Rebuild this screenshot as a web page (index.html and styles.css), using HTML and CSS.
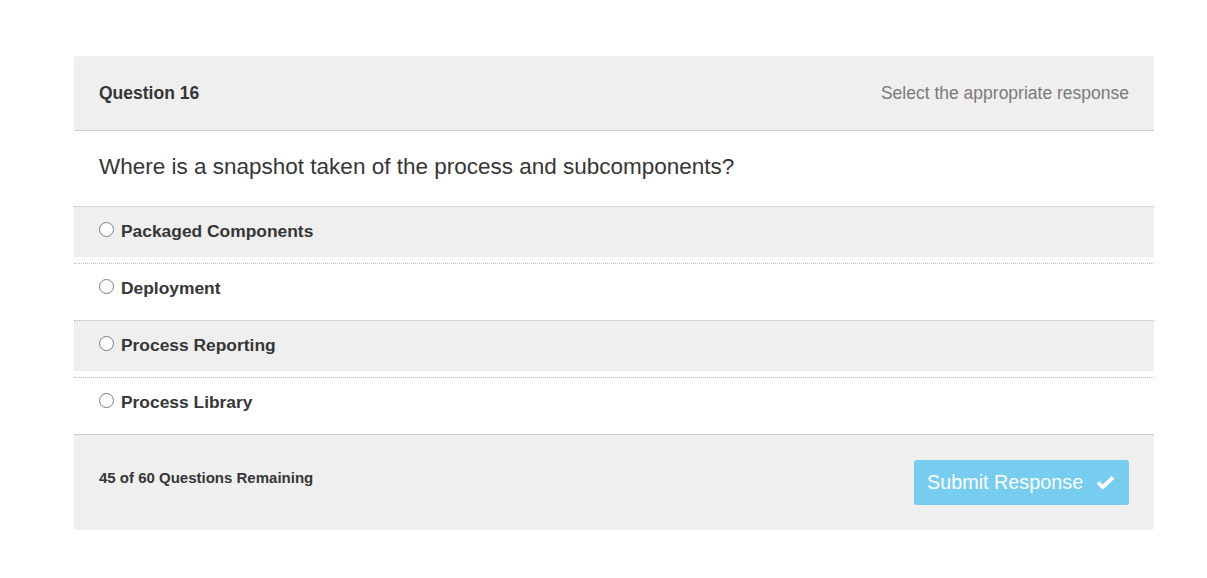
FILE: index.html
```html
<!DOCTYPE html>
<html>
<head>
<meta charset="utf-8">
<link rel="stylesheet" href="styles.css">
</head>
<body>
<div class="card">
  <div class="card-head">
    <span class="q-num">Question 16</span>
    <span class="q-hint">Select the appropriate response</span>
  </div>
  <div class="q-text">Where is a snapshot taken of the process and subcomponents?</div>
  <ul class="options">
    <li class="opt shaded"><span class="radio"></span><span class="label">Packaged Components</span></li>
    <li class="opt"><span class="radio"></span><span class="label">Deployment</span></li>
    <li class="opt shaded"><span class="radio"></span><span class="label">Process Reporting</span></li>
    <li class="opt"><span class="radio"></span><span class="label">Process Library</span></li>
  </ul>
  <div class="card-foot">
    <span class="remaining">45 of 60 Questions Remaining</span>
    <button class="submit">Submit Response
      <svg class="check" viewBox="0 0 20 16" width="19" height="15"><path d="M2 8 L7.2 13 L18 2.5" fill="none" stroke="#fff" stroke-width="4" stroke-linecap="butt" stroke-linejoin="miter"/></svg>
    </button>
  </div>
</div>
</body>
</html>
```
FILE: styles.css
```css
html, body { margin: 0; padding: 0; background: #fff; }
body {
  font-family: "Liberation Sans", Arial, sans-serif;
  color: #363636;
  padding: 56px 53px 0 74px;
}
.card {
  width: 1080px;
  border-radius: 3px;
  overflow: hidden;
}
.card-head {
  height: 74px;
  background: #efefef;
  border-bottom: 1px solid #c9cdd0;
  display: flex;
  align-items: center;
  justify-content: space-between;
  padding: 0 25px;
}
.q-num { font-weight: bold; font-size: 17.5px; }
.q-hint { font-size: 17.5px; color: #7a7a7a; }
.q-text {
  height: 75px;
  box-sizing: border-box;
  padding: 23px 25px 0;
  font-size: 22.5px;
}
.options { list-style: none; margin: 0; padding: 0; }
.opt {
  border-top: 1px dotted #bdbdbd;
  height: 51px;
  margin-bottom: 6px;
  display: flex;
  align-items: flex-start;
  padding: 14px 25px 0;
  box-sizing: border-box;
}
.opt.shaded { background: #efefef; }
.radio {
  width: 15px; height: 15px;
  border: 1px solid #7d7d7d;
  border-radius: 50%;
  box-sizing: border-box;
  background: #fff;
  margin: 1px 7px 0 0;
  flex: none;
}
.label { font-weight: bold; font-size: 17.4px; }
.card-foot {
  border-top: 1px solid #c9cdd0;
  background: #efefef;
  height: 96px;
  box-sizing: border-box;
  display: flex;
  align-items: flex-start;
  justify-content: space-between;
  padding: 25px 25px 0;
}
.remaining { font-weight: bold; font-size: 15px; margin-top: 9px; }
.submit {
  width: 215px; height: 45px;
  background: #77cdef;
  border: none;
  border-radius: 3px;
  color: #fff;
  font-family: "Liberation Sans", Arial, sans-serif;
  font-size: 19.8px;
  display: flex;
  align-items: center;
  justify-content: flex-start;
  padding: 0 0 0 13px;
}
.check { margin-left: 13px; }
```
